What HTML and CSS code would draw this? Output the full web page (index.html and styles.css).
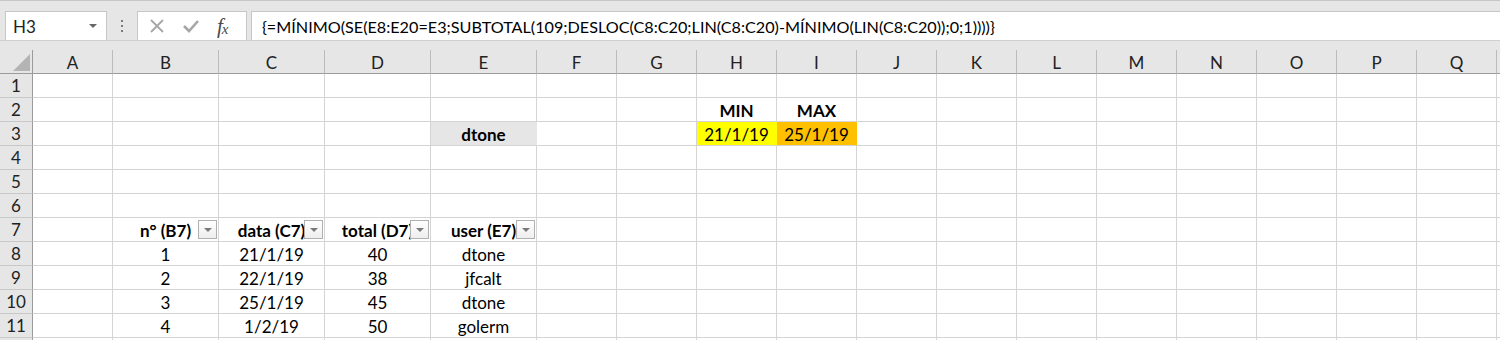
FILE: index.html
```html
<!DOCTYPE html>
<html lang="pt">
<head>
  <meta charset="UTF-8" />
  <title>Planilha</title>
  <link rel="stylesheet" href="styles.css">
</head>
<body>
  <div class="formula-row">
    <div class="name-box">
      <span>H3</span>
      <span class="name-arrow"></span>
    </div>
    <svg class="grip" width="4" height="14" viewBox="0 0 4 14">
      <rect x="1" y="1" width="2" height="2" fill="#7a7a7a"/>
      <rect x="1" y="6" width="2" height="2" fill="#7a7a7a"/>
      <rect x="1" y="11" width="2" height="2" fill="#7a7a7a"/>
    </svg>
    <div class="fx-box">
      <svg width="16" height="16" viewBox="0 0 16 16">
        <path d="M2 2 L14 14 M14 2 L2 14" stroke="#a6a6a6" stroke-width="1.8" fill="none"/>
      </svg>
      <svg width="18" height="16" viewBox="0 0 18 16">
        <path d="M2 8 L7 13 L16 3" stroke="#a6a6a6" stroke-width="2.6" fill="none"/>
      </svg>
      <span class="fx">f<sub>x</sub></span>
    </div>
    <div class="formula">{=MÍNIMO(SE(E8:E20=E3;SUBTOTAL(109;DESLOC(C8:C20;LIN(C8:C20)-MÍNIMO(LIN(C8:C20));0;1))))}</div>
  </div>

  <div class="sheet" id="sheet"></div>

  <script>
    const cols = "ABCDEFGHIJKLMNOPQ".split("");

    // cell contents: "row:col" -> [text, extra classes]
    const cells = {
      "2:H": ["MIN", "bold"],
      "2:I": ["MAX", "bold"],
      "3:E": ["dtone", "bold fill-gray"],
      "3:H": ["21/1/19", "fill-yellow"],
      "3:I": ["25/1/19", "fill-orange"],
      "7:B": ["n° (B7)", "bold filter"],
      "7:C": ["data (C7)", "bold filter"],
      "7:D": ["total (D7)", "bold filter"],
      "7:E": ["user (E7)", "bold filter"],
      "8:B": ["1"], "8:C": ["21/1/19"], "8:D": ["40"], "8:E": ["dtone"],
      "9:B": ["2"], "9:C": ["22/1/19"], "9:D": ["38"], "9:E": ["jfcalt"],
      "10:B": ["3"], "10:C": ["25/1/19"], "10:D": ["45"], "10:E": ["dtone"],
      "11:B": ["4"], "11:C": ["1/2/19"], "11:D": ["50"], "11:E": ["golerm"]
    };

    const sheet = document.getElementById("sheet");
    let html = '<div class="hd corner"><span class="corner-tri"></span></div>';
    cols.forEach(c => { html += `<div class="hd col-hd">${c}</div>`; });
    html += '<div class="hd col-hd"></div>';

    // row 12 only peeks in at the bottom edge, so its number stays hidden
    for (let r = 1; r <= 12; r++) {
      html += `<div class="hd row-hd">${r < 12 ? r : ""}</div>`;
      cols.forEach(c => {
        const cell = cells[r + ":" + c];
        if (!cell) { html += '<div class="cell"></div>'; return; }
        const cls = cell[1] || "";
        let inner = `<span class="txt">${cell[0]}</span>`;
        if (cls.includes("filter")) inner += '<span class="drop"></span>';
        html += `<div class="cell ${cls}">${inner}</div>`;
      });
      html += '<div class="cell"></div>';
    }
    sheet.innerHTML = html;
  </script>
</body>
</html>
```

FILE: styles.css
```css
* {
  box-sizing: border-box;
}

body {
  margin: 0;
  width: 1500px;
  height: 340px;
  overflow: hidden;
  background-color: #e6e6e6;
  font-family: Lato, "Open Sans", sans-serif;
  font-size: 17px;
  color: #000;
}

/* formula bar */

.formula-row {
  display: flex;
  align-items: stretch;
  height: 41px;
  padding: 10px 0 0 5px;
  border-top: 1px solid #c6c6c6;
  border-bottom: 1px solid #d0d0d0;
  margin-bottom: 9px;
}

.name-box {
  width: 102px;
  background-color: #fff;
  border: 1px solid #c6c6c6;
  border-bottom: none;
  display: flex;
  align-items: center;
  justify-content: space-between;
  padding: 0 9px 0 7px;
  color: #222;
}

.name-arrow {
  width: 0;
  height: 0;
  border-left: 4px solid transparent;
  border-right: 4px solid transparent;
  border-top: 4px solid #666;
}

.grip {
  align-self: center;
  margin: 0 13px;
}

.fx-box {
  width: 110px;
  background-color: #fff;
  border: 1px solid #c6c6c6;
  border-bottom: none;
  display: flex;
  align-items: center;
  gap: 17px;
  padding-left: 11px;
}

.fx {
  font-family: "Liberation Serif", serif;
  font-style: italic;
  font-size: 21px;
  color: #4a4a4a;
  letter-spacing: -1px;
}

.fx sub {
  font-size: 15px;
  vertical-align: -1px;
}

.formula {
  flex: 1;
  margin-left: 4px;
  background-color: #fff;
  border: 1px solid #c6c6c6;
  border-bottom: none;
  border-right: none;
  display: flex;
  align-items: center;
  padding-left: 10px;
  font-size: 16.2px;
  white-space: nowrap;
  overflow: hidden;
}

/* sheet grid */

.sheet {
  display: grid;
  grid-template-columns: 33px 80px repeat(4, 106px) repeat(12, 80px) 80px;
  grid-auto-rows: 24px;
  width: 1500px;
  overflow: hidden;
}

.hd {
  background-color: #e6e6e6;
  color: #222;
  display: flex;
  align-items: center;
  justify-content: center;
}

.col-hd {
  border-right: 1px solid #bcbcbc;
  border-bottom: 1px solid #9b9b9b;
  padding-top: 1px;
}

.row-hd {
  border-right: 1px solid #9b9b9b;
  border-bottom: 1px solid #c8c8c8;
}

.corner {
  border-right: 1px solid #9b9b9b;
  border-bottom: 1px solid #9b9b9b;
  position: relative;
}

.corner-tri {
  position: absolute;
  right: 2px;
  bottom: 2px;
  width: 0;
  height: 0;
  border-left: 17px solid transparent;
  border-bottom: 17px solid #b4b4b4;
}

.cell {
  position: relative;
  background-color: #fff;
  border-right: 1px solid #d4d4d4;
  border-bottom: 1px solid #d4d4d4;
  display: flex;
  align-items: center;
  justify-content: center;
  white-space: nowrap;
  overflow: hidden;
  padding-top: 1px;
}

.bold {
  font-weight: bold;
}

.fill-gray {
  background-color: #e7e6e6;
  border-right-color: #e7e6e6;
}

.fill-yellow {
  background-color: #ffff00;
  border-right-color: #ffff00;
}

.fill-orange {
  background-color: #ffc000;
  border-right-color: #ffc000;
}

/* autofilter button */

.drop {
  position: absolute;
  right: 1px;
  top: 2px;
  width: 19px;
  height: 19px;
  border: 1px solid #b0b0b0;
  background: linear-gradient(#ffffff, #eeeeee);
  display: flex;
  align-items: center;
  justify-content: center;
}

.drop::after {
  content: "";
  width: 0;
  height: 0;
  border-left: 4px solid transparent;
  border-right: 4px solid transparent;
  border-top: 4px solid #7a7a7a;
}
```
